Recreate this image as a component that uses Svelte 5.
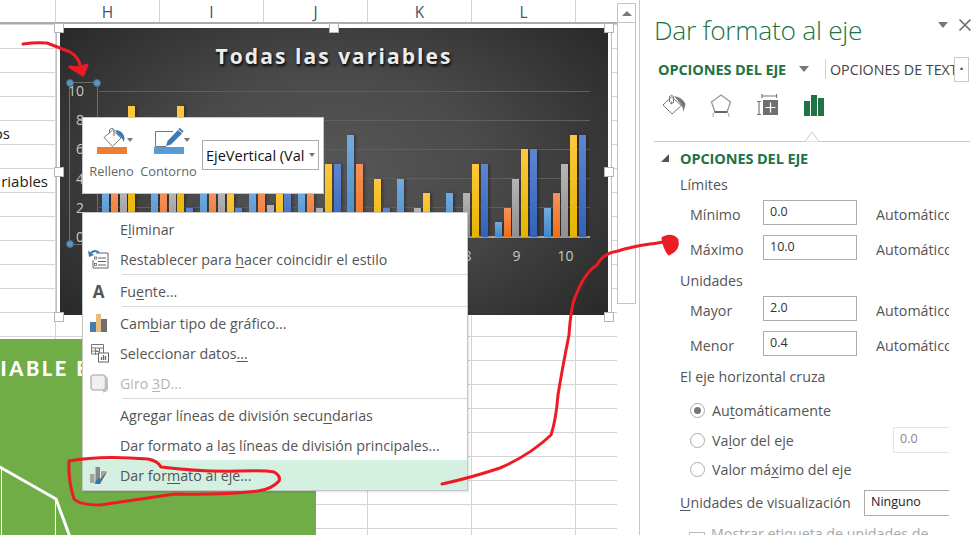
<script>
  const columns = ['H', 'I', 'J', 'K', 'L', ''];
  const axisLabels = [10, 8, 6, 4, 2, 0];
  // series order: blue, orange, gray, yellow, dark blue
  const categories = [
    [3, 3, 3, 9, 0.2],
    [3, 3, 3, 9, 2],
    [3, 3, 3, 3, 2],
    [3, 3, 2.2, 3, 3],
    [3, 3, 2, 5, 5],
    [7, 5, 0, 4, 2],
    [4, 0, 2, 3, 0],
    [3, 0, 3, 5, 5],
    [1, 2, 4, 6, 6],
    [2, 3, 5, 7, 7]
  ];
  const series = ['blue', 'orange', 'gray', 'yellow', 'navy'];
</script>

<div class="app">
  <div class="sheet">
    <div class="col-head">
      <div class="corner"></div>
      {#each columns as c}
        <div class="col">{c}</div>
      {/each}
    </div>
    <div class="cells">
      <span class="cell-text one">os</span>
      <span class="cell-text two">riables</span>
    </div>

    <div class="pitch">
      <span class="pitch-title">RIABLE E</span>
      <svg class="pitch-lines" viewBox="0 0 316 196" width="316" height="196">
        <path d="M-2 127 L56 160 L70 198" fill="none" stroke="#fff" stroke-width="3" />
        <path d="M1.5 130 V196 M55.5 160 V196" fill="none" stroke="#fff" stroke-width="1" />
      </svg>
    </div>

    <div class="chart-frame">
      <div class="chart">
        <div class="chart-title">Todas las variables</div>
        <div class="plot">
          <div class="grid-lines">
            {#each axisLabels as _}
              <div class="grid-line"></div>
            {/each}
          </div>
          <div class="bars">
            {#each categories as values}
              <div class="category">
                {#each values as v, i}
                  <div class="bar {series[i]}" style="height: {v * 14.6}px"></div>
                {/each}
              </div>
            {/each}
          </div>
        </div>
        <div class="axis-labels">
          {#each axisLabels as n}
            <span>{n}</span>
          {/each}
        </div>
        <div class="x-labels"><span>8</span><span>9</span><span>10</span></div>
        <div class="axis-select">
          <i class="dot tl"></i><i class="dot tr"></i><i class="dot bl"></i>
        </div>
      </div>
      <i class="handle h1"></i><i class="handle h2"></i><i class="handle h3"></i>
      <i class="handle h4"></i><i class="handle h5"></i>
      <i class="handle h6"></i><i class="handle h7"></i><i class="handle h8"></i>
    </div>

    <div class="mini-bar">
      <div class="mini-btn">
        <div class="mini-icon">
          <svg width="30" height="22" viewBox="0 0 30 22">
            <path d="M7 10.5 L15.5 3 L24 11 L15.5 19.5 Z" fill="#fff" stroke="#777" />
            <path d="M12.5 6.5 V2.5 Q15 0 17 2.5 V9" fill="none" stroke="#777" />
            <path d="M18 3 Q26 3 27.5 11 L27 15 Q24 9 21 8 Z" fill="#3f79b5" />
          </svg>
          <i class="caret"></i>
        </div>
        <div class="swatch fill"></div>
        <span>Relleno</span>
      </div>
      <div class="mini-btn">
        <div class="mini-icon">
          <svg width="30" height="22" viewBox="0 0 30 22">
            <path d="M19 4.5 H1.5 V19.5 H12" fill="none" stroke="#777" />
            <path d="M12 19 L13.5 14 L24 3 L28 6.5 L17 17.5 Z" fill="#3f79b5" />
            <path d="M25 1.5 L29 5" stroke="#3f79b5" stroke-width="2" />
          </svg>
          <i class="caret"></i>
        </div>
        <div class="swatch line"></div>
        <span>Contorno</span>
      </div>
      <div class="mini-select">
        <span>EjeVertical (Val</span>
        <i class="caret"></i>
      </div>
    </div>

    <div class="menu">
      <div class="item"><span class="ico"></span><span>E<u>l</u>iminar</span></div>
      <div class="item">
        <span class="ico">
          <svg width="22" height="20" viewBox="0 0 22 20">
            <path d="M8 4 H20 V19 H5 V11" fill="none" stroke="#666" />
            <path d="M10 9 H18 M10 12.5 H18 M10 16 H18" stroke="#666" />
            <rect x="6.5" y="8" width="2" height="2" fill="none" stroke="#666" stroke-width=".8" />
            <rect x="6.5" y="14.5" width="2" height="2" fill="none" stroke="#666" stroke-width=".8" />
            <path d="M2 5 Q6 0 11 3.5" fill="none" stroke="#3f79b5" stroke-width="2" />
            <path d="M0 1.5 L1 8 L6 6 Z" fill="#3f79b5" />
          </svg>
        </span>
        <span>Restablecer para <u>h</u>acer coincidir el estilo</span>
      </div>
      <div class="sep"></div>
      <div class="item"><span class="ico letter">A</span><span>Fu<u>e</u>nte...</span></div>
      <div class="sep"></div>
      <div class="item">
        <span class="ico">
          <svg width="20" height="20" viewBox="0 0 20 20">
            <rect x="1" y="9" width="6" height="10" fill="#4a7ab0" />
            <rect x="7" y="1" width="5" height="18" fill="#e5bd7f" />
            <rect x="12" y="6" width="6" height="13" fill="#6f6f6f" />
          </svg>
        </span>
        <span>Cam<u>b</u>iar tipo de gráfico...</span>
      </div>
      <div class="item">
        <span class="ico">
          <svg width="20" height="20" viewBox="0 0 20 20">
            <path d="M2.5 1.5 H14.5 V11 H2.5 Z M2.5 5 H14.5 M2.5 8 H9 M6.5 5 V12 M10.5 5 V10" fill="#fff" stroke="#777" />
            <path d="M6.5 8.5 H11 M6.5 8.5 V12" stroke="#d2691e" />
            <rect x="9.5" y="10" width="10" height="9" fill="#fff" stroke="#666" />
            <path d="M12.5 17 V14 M14.5 17 V12 M16.5 17 V13" stroke="#666" stroke-width="1.3" />
          </svg>
        </span>
        <span>Seleccionar datos<u>...</u></span>
      </div>
      <div class="item disabled">
        <span class="ico">
          <svg width="20" height="20" viewBox="0 0 20 20">
            <rect x="2" y="2" width="14.5" height="15" rx="3" fill="#f2eff4" stroke="#bdbdbd" stroke-width="1.6" />
            <path d="M16.5 4 Q18 5 18 8 V16 Q17 18.5 14 18.5" fill="none" stroke="#bdbdbd" stroke-width="2" />
          </svg>
        </span>
        <span>Giro <u>3</u>D...</span>
      </div>
      <div class="sep"></div>
      <div class="item"><span class="ico"></span><span>Agregar líneas de división secu<u>n</u>darias</span></div>
      <div class="item"><span class="ico"></span><span>Dar formato a la<u>s</u> líneas de división principales...</span></div>
      <div class="item active">
        <span class="ico">
          <svg width="20" height="20" viewBox="0 0 20 20">
            <rect x="1" y="9" width="4.5" height="9" fill="#a5a5a5" />
            <rect x="6.5" y="2" width="4.5" height="16" fill="#8a8a8a" />
            <path d="M12 6 H17 V9 L12 14 Z" fill="#a5a5a5" />
            <path d="M18.5 6 L11 14 L9 13 L8 17 L5.5 19 L11 19 L13 15.5 Z" fill="#5f6b75" />
            <path d="M6 18.5 Q6.5 14.5 10 13.5 L12 15.5 Q10.5 19 6 18.5 Z" fill="#2f77bd" />
          </svg>
        </span>
        <span>Dar for<u>m</u>ato al eje...</span>
      </div>
    </div>
  </div>

  <div class="scrollbar">
    <div class="scroll-up"><i></i></div>
    <div class="scroll-thumb"></div>
  </div>

  <aside class="pane">
    <header class="pane-head">
      <h1>Dar formato al eje</h1>
      <i class="pane-menu"></i>
      <svg class="pane-close" width="14" height="14" viewBox="0 0 14 14">
        <path d="M1.5 1.5 L12.5 12.5 M12.5 1.5 L1.5 12.5" stroke="#6f6f6f" stroke-width="1.7" />
      </svg>
    </header>
    <div class="tabs">
      <span class="tab-main">OPCIONES DEL EJE</span>
      <i class="tab-caret"></i>
      <span class="tab-sep"></span>
      <span class="tab-other">OPCIONES DE TEXTO</span>
      <span class="tab-more">·</span>
    </div>
    <div class="icons">
      <svg width="24" height="24" viewBox="0 0 24 24">
        <path d="M1 12 L9.5 4 L19.5 12.5 L10 21 Z" fill="#fff" stroke="#777" />
        <path d="M7.5 9 V3.5 Q9.5 1 11.5 3.5 V10" fill="none" stroke="#777" />
        <circle cx="9.500" cy="10" r="1.200" fill="#777" />
        <path d="M12 3 Q20 4 23.500 11 L21.500 19 Q20.500 12 17 9 Z" fill="#777" />
      </svg>
      <svg width="24" height="25" viewBox="0 0 24 25">
        <path d="M12 2 L21.500 9 L18 19 H6 L2.500 9 Z" fill="#fff" stroke="#999" stroke-width="1.300" />
        <path d="M5.500 19 H18.500" stroke="#666" stroke-width="2" />
        <path d="M4.500 20 L4 24 M19.500 20 L20 24" stroke="#bbb" stroke-width="1.300" />
      </svg>
      <svg width="24" height="24" viewBox="0 0 24 24">
        <path d="M7 1 V5 M21.500 1 V5 M7 3 H21.500 M2 8.500 H6 M2 21.500 H6 M4 8.500 V21.500" fill="none" stroke="#777" stroke-width="1.200" />
        <rect x="8" y="7" width="15" height="15" fill="#6f6f6f" />
        <path d="M15.500 9.500 V19.500 M10.500 14.500 H20.500" stroke="#fff" stroke-width="1.200" />
      </svg>
      <svg width="24" height="24" viewBox="0 0 24 24">
        <rect x="2" y="8" width="6" height="15" fill="#217346" />
        <rect x="9" y="2" width="6" height="21" fill="#217346" />
        <rect x="16" y="5" width="6" height="18" fill="#217346" />
      </svg>
    </div>
    <div class="divider">
      <svg width="18" height="11" viewBox="0 0 18 11">
        <path d="M0 10.500 H2 L9 1 L16 10.500 H18" fill="#fff" stroke="#c8c8c8" />
      </svg>
    </div>

    <div class="section">
      <i class="section-caret"></i>
      <h2>OPCIONES DEL EJE</h2>
    </div>

    <div class="form">
      <div class="label limits">Límites</div>
      <div class="field"><span>Mínimo</span><div class="input">0.0</div><span class="auto">Automático</span></div>
      <div class="field"><span>Máximo</span><div class="input">10.0</div><span class="auto">Automático</span></div>
      <div class="label units">Unidades</div>
      <div class="field"><span>Mayor</span><div class="input">2.0</div><span class="auto">Automático</span></div>
      <div class="field"><span>Menor</span><div class="input">0.4</div><span class="auto">Automático</span></div>
      <div class="label cross">El eje horizontal cruza</div>
      <div class="radio first"><i class="circle on"></i><span>Au<u>t</u>omáticamente</span></div>
      <div class="radio"><i class="circle"></i><span>Va<u>l</u>or del eje</span><div class="input off">0.0</div></div>
      <div class="radio"><i class="circle"></i><span>Valor má<u>x</u>imo del eje</span></div>
      <div class="display"><span><u>U</u>nidades de visualización</span><div class="input pick">Ninguno</div></div>
      <div class="check"><i class="box"></i><span>Mostrar etiqueta de unidades de</span></div>
    </div>
  </aside>

  <svg class="ink" width="975" height="535" viewBox="0 0 975 535">
    <path d="M23 44 Q36 42 47 43 Q60 48 70 52 Q79 57 81 68" />
    <path d="M70 67 Q80 69 87 65 L83 75 Z" class="blob" />
    <path d="M442 484 Q470 478 500 468 Q530 455 551 435 Q556 420 558 395 Q562 370 569 335 Q571 305 576 295 Q585 272 597 265 Q603 253 618 251 Q630 247 650 244 Q660 243 666 241" />
    <path d="M663 238 Q672 234 677 240 Q679 249 669 254 Q664 247 663 238 Z" class="blob" />
    <path d="M69 461 Q100 455 148 459 Q158 461 161 467 Q200 472 240 471 Q265 470 274 472 Q281 476 279 481 Q272 489 258 491 Q225 495 175 494 Q140 499 100 505 Q80 505 74 499 Q68 480 69 461 Z" />
  </svg>
</div>

<style>
  :global(body) {
    margin: 0;
    overflow: hidden;
    background: #fff;
  }

  .app {
    position: relative;
    display: flex;
    width: 975px;
    height: 535px;
    overflow: hidden;
    font-family: "Open Sans", "Noto Sans", sans-serif;
    font-size: 14.25px;
    color: #444;
  }

  u {
    text-underline-offset: 2px;
    text-decoration-thickness: 1px;
  }

  .sheet {
    position: relative;
    flex: 0 0 617px;
    overflow: hidden;
  }

  .col-head {
    display: flex;
    height: 24px;
    border-bottom: 2px solid #ababab;
    box-sizing: border-box;
    background: #fff;
  }

  .corner {
    flex: 0 0 55px;
    border-right: 1px solid #d4d4d4;
  }

  .col {
    flex: 0 0 103px;
    border-right: 1px solid #d4d4d4;
    text-align: center;
    font-size: 15.5px;
    line-height: 24px;
    color: #44546a;
  }

  .cells {
    position: relative;
    height: 511px;
    background-image:
      linear-gradient(#d4d4d4 1px, transparent 1px),
      linear-gradient(90deg, #d4d4d4 1px, transparent 1px);
    background-size: 100% 24px, 104px 100%;
    background-position: 0 0, 55px 0;
  }

  .cell-text {
    position: absolute;
    right: calc(100% - 48px);
    font-size: 15px;
    color: #222;
    line-height: 24px;
  }

  .cell-text.one {
    right: calc(100% - 10px);
    top: 97px;
  }

  .cell-text.two {
    top: 145px;
  }

  .pitch {
    position: absolute;
    left: 0;
    top: 339px;
    width: 316px;
    height: 196px;
    background: #70ad47;
    overflow: hidden;
  }

  .pitch-title {
    position: absolute;
    left: -15px;
    top: 17px;
    font-family: "Lato", sans-serif;
    font-size: 20px;
    font-weight: 900;
    letter-spacing: 2.6px;
    color: #fff;
    white-space: nowrap;
  }

  .pitch-lines {
    display: block;
  }

  .chart-frame {
    position: absolute;
    left: 56px;
    top: 24px;
    width: 556px;
    height: 292px;
    border-right: 1px solid #c0c0c0;
    border-left: 1px solid #c0c0c0;
    padding: 4px 4px 0 3px;
    box-sizing: border-box;
    background: #fff;
  }

  .chart {
    position: relative;
    width: 548px;
    height: 287px;
    background: radial-gradient(ellipse 62% 75% at 50% 50%, #575757 0%, #4a4a4a 45%, #2b2b2b 100%);
    overflow: hidden;
  }

  .chart-title {
    padding-top: 14px;
    text-align: center;
    font-family: "Open Sans", sans-serif;
    font-size: 21px;
    line-height: 28px;
    font-weight: 700;
    letter-spacing: 2.05px;
    color: #ececec;
    text-shadow: 1px 2px 3px #000;
  }

  .plot {
    position: absolute;
    left: 39px;
    top: 63px;
    width: 491px;
    height: 147px;
  }

  .grid-lines {
    position: absolute;
    inset: 0;
    display: flex;
    flex-direction: column;
    justify-content: space-between;
  }

  .grid-line {
    height: 1px;
    background: #5f5f5f;
  }

  .grid-line:last-child {
    height: 2px;
    background: #a8a8a8;
  }

  .bars {
    position: absolute;
    left: 3px;
    right: 0;
    bottom: 1px;
    top: 0;
    display: flex;
    align-items: flex-end;
  }

  .category {
    display: flex;
    flex: 0 0 49.1px;
    align-items: flex-end;
    gap: 1.8px;
  }

  .bar {
    flex: 0 0 7px;
    box-shadow: 2px 0 3px rgba(0, 0, 0, 0.3);
  }

  .blue { background: linear-gradient(#72abe0, #4288c8); }
  .orange { background: linear-gradient(#f4925c, #ee6f18); }
  .gray { background: linear-gradient(#b5b5b5, #8f8f8f); }
  .yellow { background: linear-gradient(#ffc83c, #e6b300); }
  .navy { background: linear-gradient(#5f85cf, #3162b8); }

  .axis-labels {
    position: absolute;
    left: 6px;
    top: 54px;
    width: 20px;
    height: 164px;
    display: flex;
    flex-direction: column;
    justify-content: space-between;
    align-items: flex-end;
    padding-right: 2px;
    box-sizing: border-box;
    font-size: 14px;
    line-height: 18px;
    color: #c8c8c8;
  }

  .x-labels {
    position: absolute;
    left: 383px;
    top: 218px;
    display: flex;
    font-size: 14px;
    line-height: 20px;
    color: #c8c8c8;
  }

  .x-labels span {
    flex: 0 0 49px;
    text-align: center;
  }

  .axis-select {
    position: absolute;
    left: 9px;
    top: 54px;
    width: 29px;
    height: 163px;
    border: 1px solid #6e6e6e;
    box-sizing: border-box;
  }

  .dot {
    position: absolute;
    width: 6px;
    height: 6px;
    border-radius: 50%;
    background: #5f93bb;
    border: 1px solid #3f6d90;
  }

  .dot.tl { left: -4px; top: -4px; }
  .dot.tr { right: -4px; top: -4px; }
  .dot.bl { left: -4px; bottom: -4px; }

  .handle {
    position: absolute;
    width: 8px;
    height: 8px;
    background: #fff;
    border: 1px solid #b5b5b5;
  }

  .h1 { left: -3px; top: -1px; }
  .h2 { left: 272px; top: -1px; }
  .h3 { left: 547px; top: -1px; }
  .h4 { left: -3px; top: 143px; }
  .h5 { left: 547px; top: 143px; }
  .h6 { left: -3px; top: 288px; }
  .h7 { left: 272px; top: 288px; }
  .h8 { left: 547px; top: 288px; }

  .mini-bar {
    position: absolute;
    left: 82px;
    top: 117px;
    width: 242px;
    height: 77px;
    display: flex;
    box-sizing: border-box;
    background: #fff;
    border: 1px solid #c6c6c6;
    padding: 9px 4px 0 0;
    font-size: 12.8px;
    color: #666;
  }

  .mini-btn {
    flex: 0 0 57px;
    display: flex;
    flex-direction: column;
    align-items: center;
  }

  .mini-icon {
    position: relative;
    width: 30px;
    height: 22px;
  }

  .mini-icon .caret {
    position: absolute;
    left: 30px;
    top: 11px;
  }

  .caret {
    width: 0;
    height: 0;
    border: 3.500px solid transparent;
    border-top: 4px solid #777;
    border-bottom: 0;
  }

  .swatch {
    width: 30px;
    height: 7px;
    margin-top: -2px;
  }

  .swatch.fill { background: #ed7d31; }
  .swatch.line { background: #5b9bd5; }

  .mini-btn span {
    margin-top: 8px;
    line-height: 18px;
    white-space: nowrap;
  }

  .mini-select {
    display: flex;
    align-items: center;
    justify-content: space-between;
    width: 118px;
    height: 30px;
    margin: 13px 0 0 5px;
    padding: 0 3px;
    box-sizing: border-box;
    border: 1px solid #aaa;
    color: #111;
    font-size: 14.5px;
    white-space: nowrap;
  }

  .menu {
    position: absolute;
    left: 82px;
    top: 212px;
    width: 386px;
    box-sizing: border-box;
    background: #fff;
    border: 1px solid #c6c6c6;
    padding-top: 1px;
    box-shadow: 1px 1px 2px rgba(0, 0, 0, 0.12);
  }

  .item {
    display: flex;
    align-items: center;
    height: 30px;
    white-space: nowrap;
    color: #555;
    font-size: 14.25px;
  }

  .item.disabled {
    color: #b5b5b5;
  }

  .item.active {
    background: #d3f0e0;
    margin-bottom: 0;
  }

  .ico {
    flex: 0 0 37px;
    display: flex;
    justify-content: center;
    padding-right: 6px;
    box-sizing: border-box;
  }

  .ico.letter {
    font-size: 17px;
    font-weight: 700;
    color: #555;
  }

  .sep {
    height: 1px;
    margin: 0 0 1px 39px;
    background: #d8d8d8;
  }

  .scrollbar {
    flex: 0 0 19px;
    height: 301px;
    margin-top: 3px;
    border: 1px solid #c4c4c4;
    box-sizing: border-box;
    background: #fff;
  }

  .scroll-up {
    display: flex;
    justify-content: center;
    align-items: center;
    height: 18px;
    border-bottom: 1px solid #c4c4c4;
  }

  .scroll-up i {
    width: 0;
    height: 0;
    border: 5px solid transparent;
    border-bottom: 5px solid #777;
    border-top: 0;
  }

  .pane {
    position: relative;
    flex: 1;
    margin-left: 3px;
    border-left: 1px solid #c8c8c8;
    padding: 0 0 0 14px;
    overflow: hidden;
  }

  .pane-head {
    display: flex;
    height: 54px;
    align-items: center;
    padding-top: 5px;
    box-sizing: border-box;
  }

  h1 {
    margin: 0;
    font-size: 26.400px;
    font-weight: 300;
    letter-spacing: -0.3px;
    color: #217346;
    white-space: nowrap;
  }

  .pane-menu {
    position: absolute;
    left: 298px;
    top: 22px;
    width: 0;
    height: 0;
    border: 5.500px solid transparent;
    border-top: 6px solid #777;
    border-bottom: 0;
  }

  .pane-close {
    position: absolute;
    left: 318px;
    top: 18px;
  }

  .tabs {
    display: flex;
    align-items: center;
    height: 30px;
    padding-left: 4px;
    white-space: nowrap;
  }

  .tab-main {
    flex: 0 0 133px;
    font-weight: 700;
    font-size: 14.500px;
    letter-spacing: -0.1px;
    color: #217346;
  }

  .tab-caret {
    margin-left: 8px;
    width: 0;
    height: 0;
    border: 5.500px solid transparent;
    border-top: 6px solid #777;
    border-bottom: 0;
  }

  .tab-sep {
    width: 1px;
    height: 20px;
    margin: 0 4px 0 16px;
    background: #d0d0d0;
  }

  .tab-other {
    flex: 0 0 124px;
    overflow: hidden;
    font-size: 14.250px;
    color: #444;
  }

  .tab-more {
    flex: 0 0 13px;
    height: 23px;
    border: 1px solid #c8c8c8;
    text-align: center;
    line-height: 22px;
    font-weight: 700;
  }

  .icons {
    display: flex;
    gap: 22.500px;
    height: 41px;
    padding: 9px 0 0 8px;
    box-sizing: border-box;
  }

  .divider {
    position: relative;
    height: 1px;
    margin: 16px 5px 0 0;
    background: #c8c8c8;
  }

  .divider svg {
    position: absolute;
    left: 149px;
    top: -10px;
  }

  .section {
    display: flex;
    align-items: center;
    height: 32px;
    padding-left: 7px;
  }

  .section-caret {
    width: 0;
    height: 0;
    border-style: solid;
    border-width: 0 0 8px 8px;
    border-color: transparent transparent #555 transparent;
    margin-right: 11px;
  }

  h2 {
    margin: 0;
    font-size: 14.500px;
    font-weight: 700;
    letter-spacing: -0.1px;
    color: #217346;
  }

  .form {
    padding-left: 26px;
    width: 270px;
    white-space: nowrap;
    color: #555;
    font-size: 14.250px;
  }

  .label {
    height: 20px;
    line-height: 22px;
  }

  .label.limits {
    margin-bottom: 1px;
  }

  .label.units {
    margin: 5px 0 1px;
  }

  .label.cross {
    height: 22px;
    margin-top: 5px;
    line-height: 22px;
  }

  .field {
    display: flex;
    align-items: center;
    height: 35px;
    padding-left: 10px;
  }

  .field > span {
    padding-top: 4px;
  }

  .field > span:first-child {
    flex: 0 0 73px;
  }

  .auto {
    flex: 0 0 73px;
    overflow: hidden;
    margin-left: 19px;
  }

  .input {
    width: 94px;
    height: 25px;
    box-sizing: border-box;
    border: 1px solid #ababab;
    padding-left: 6px;
    line-height: 21px;
    font-size: 12.500px;
    color: #333;
  }

  .radio {
    display: flex;
    align-items: center;
    height: 29.500px;
    padding-left: 10px;
  }

  .radio.first {
    margin-top: 8px;
  }

  .circle {
    position: relative;
    width: 13px;
    height: 13px;
    margin-right: 7px;
    border: 1px solid #aaa;
    border-radius: 50%;
  }

  .circle.on::after {
    content: '';
    position: absolute;
    inset: 3px;
    border-radius: 50%;
    background: #777;
  }

  .input.off {
    position: absolute;
    left: 253px;
    width: 56px;
    border: 1px solid #e4e4e4;
    border-right: 0;
    color: #888;
    height: 26px;
  }

  .display {
    display: flex;
    align-items: center;
    height: 32px;
    margin-top: 2px;
  }

  .input.pick {
    position: absolute;
    left: 224px;
    width: 85px;
    border-right: 0;
    height: 26px;
    color: #222;
  }

  .check {
    display: flex;
    align-items: center;
    height: 26px;
    padding-left: 9px;
    margin-top: 2px;
    color: #a8a8a8;
  }

  .box {
    align-self: flex-start;
    width: 14px;
    height: 14px;
    margin: 11px 6px 0 0;
    border: 1px solid #bbb;
  }

  .ink {
    position: absolute;
    left: 0;
    top: 0;
    pointer-events: none;
  }

  .ink path {
    fill: none;
    stroke: #ed1c24;
    stroke-width: 3;
    stroke-linecap: round;
    stroke-linejoin: round;
  }

  .ink path.blob {
    fill: #ed1c24;
  }
</style>
